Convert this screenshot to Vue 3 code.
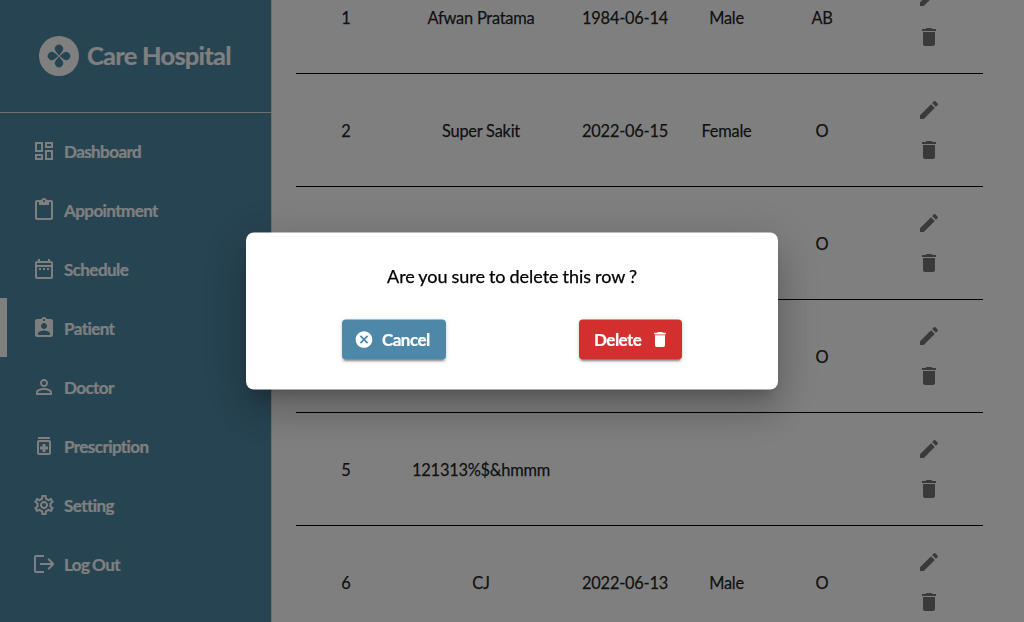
<script setup>
const navItems = [
  { label: 'Dashboard', d: 'M19 5v2h-4V5h4M9 5v6H5V5h4m10 8v6h-4v-6h4M9 17v2H5v-2h4M21 3h-8v6h8V3zM11 3H3v10h8V3zm10 8h-8v10h8V11zm-10 4H3v6h8v-6z' },
  { label: 'Appointment', d: 'M19 2h-4.18C14.4.84 13.3 0 12 0c-1.3 0-2.4.84-2.82 2H5c-1.1 0-2 .9-2 2v16c0 1.1.9 2 2 2h14c1.1 0 2-.9 2-2V4c0-1.1-.9-2-2-2zm-7 0c.55 0 1 .45 1 1s-.45 1-1 1-1-.45-1-1 .45-1 1-1zm7 18H5V4h2v3h10V4h2v16z' },
  { label: 'Schedule', d: 'M7 11h2v2H7v-2zm14-5v14c0 1.1-.9 2-2 2H5c-1.11 0-2-.9-2-2l.01-14c0-1.1.88-2 1.99-2h1V2h2v2h8V2h2v2h1c1.1 0 2 .9 2 2zM5 8h14V6H5v2zm14 12V10H5v10h14zm-4-7h2v-2h-2v2zm-4 0h2v-2h-2v2z' },
  { label: 'Patient', active: true, d: 'M19 3h-4.18C14.4 1.84 13.3 1 12 1c-1.3 0-2.4.84-2.82 2H5c-1.1 0-2 .9-2 2v14c0 1.1.9 2 2 2h14c1.1 0 2-.9 2-2V5c0-1.1-.9-2-2-2zm-7 0c.55 0 1 .45 1 1s-.45 1-1 1-1-.45-1-1 .45-1 1-1zm0 4c1.66 0 3 1.34 3 3s-1.34 3-3 3-3-1.34-3-3 1.34-3 3-3zm6 12H6v-1.4c0-2 4-3.1 6-3.1s6 1.1 6 3.1V19z' },
  { label: 'Doctor', d: 'M12 5.9c1.16 0 2.1.94 2.1 2.1s-.94 2.1-2.1 2.1S9.9 9.16 9.9 8s.94-2.1 2.1-2.1m0 9c2.97 0 6.1 1.46 6.1 2.1v1.1H5.9V17c0-.64 3.13-2.1 6.1-2.1M12 4C9.79 4 8 5.79 8 8s1.79 4 4 4 4-1.79 4-4-1.79-4-4-4zm0 9c-2.67 0-8 1.34-8 4v3h16v-3c0-2.66-5.33-4-8-4z' },
  { label: 'Prescription', d: 'M6 3h12v2H6zm11 3H7c-1.1 0-2 .9-2 2v11c0 1.1.9 2 2 2h10c1.1 0 2-.9 2-2V8c0-1.1-.9-2-2-2zm0 13H7V8h10v11zm-6.5-1h3v-2.5H16v-3h-2.5V10h-3v2.5H8v3h2.5z' },
  { label: 'Setting', d: 'M19.43 12.98c.04-.32.07-.64.07-.98 0-.34-.03-.66-.07-.98l2.11-1.65c.19-.15.24-.42.12-.64l-2-3.46c-.09-.16-.26-.25-.44-.25-.06 0-.12.01-.17.03l-2.49 1c-.52-.4-1.08-.73-1.69-.98l-.38-2.65C14.46 2.18 14.25 2 14 2h-4c-.25 0-.46.18-.49.42l-.38 2.65c-.61.25-1.17.59-1.69.98l-2.49-1c-.06-.02-.12-.03-.18-.03-.17 0-.34.09-.43.25l-2 3.46c-.13.22-.07.49.12.64l2.11 1.65c-.04.32-.07.65-.07.98 0 .33.03.66.07.98l-2.11 1.65c-.19.15-.24.42-.12.64l2 3.46c.09.16.26.25.44.25.06 0 .12-.01.17-.03l2.49-1c.52.4 1.08.73 1.69.98l.38 2.65c.03.24.24.42.49.42h4c.25 0 .46-.18.49-.42l.38-2.65c.61-.25 1.17-.59 1.69-.98l2.49 1c.06.02.12.03.18.03.17 0 .34-.09.43-.25l2-3.46c.12-.22.07-.49-.12-.64l-2.11-1.65zm-1.98-1.71c.04.31.05.52.05.73 0 .21-.02.43-.05.73l-.14 1.13.89.7 1.08.84-.7 1.21-1.27-.51-1.04-.42-.9.68c-.43.32-.84.56-1.25.73l-1.06.43-.16 1.13-.2 1.35h-1.4l-.19-1.35-.16-1.13-1.06-.43c-.43-.18-.83-.41-1.23-.71l-.91-.7-1.06.43-1.27.51-.7-1.21 1.08-.84.89-.7-.14-1.13c-.03-.31-.05-.54-.05-.74s.02-.43.05-.73l.14-1.13-.89-.7-1.08-.84.7-1.21 1.27.51 1.04.42.9-.68c.43-.32.84-.56 1.25-.73l1.06-.43.16-1.13.2-1.35h1.39l.19 1.35.16 1.13 1.06.43c.43.18.83.41 1.23.71l.91.7 1.06-.43 1.27-.51.7 1.21-1.07.85-.89.7.14 1.13zM12 8c-2.21 0-4 1.79-4 4s1.79 4 4 4 4-1.79 4-4-1.79-4-4-4zm0 6c-1.1 0-2-.9-2-2s.9-2 2-2 2 .9 2 2-.9 2-2 2z' },
  { label: 'Log Out', d: 'M12 3H4c-1.1 0-2 .9-2 2v14c0 1.1.9 2 2 2h8v-2H4V5h8V3zm4.9 3.1-1.4 1.4 3.5 3.5H8v2h11l-3.5 3.5 1.4 1.4L22 12.7v-1.4l-5.1-5.2z' }
]

const patients = [
  { id: 1, name: 'Afwan Pratama', born: '1984-06-14', gender: 'Male', blood: 'AB' },
  { id: 2, name: 'Super Sakit', born: '2022-06-15', gender: 'Female', blood: 'O' },
  { id: 3, name: '', born: '', gender: '', blood: 'O' },
  { id: 4, name: '', born: '', gender: '', blood: 'O' },
  { id: 5, name: '121313%$&hmmm', born: '', gender: '', blood: '' },
  { id: 6, name: 'CJ', born: '2022-06-13', gender: 'Male', blood: 'O' }
]

const pencil = 'M3 17.25V21h3.75L17.81 9.94l-3.75-3.75L3 17.25zM20.71 7.04c.39-.39.39-1.02 0-1.41l-2.34-2.34a.9959.9959 0 0 0-1.41 0l-1.83 1.83 3.75 3.75 1.83-1.83z'
const trash = 'M6 19c0 1.1.9 2 2 2h8c1.1 0 2-.9 2-2V7H6v12zM19 4h-3.5l-1-1h-5l-1 1H5v2h14V4z'
const cancel = 'M12 2C6.47 2 2 6.47 2 12s4.47 10 10 10 10-4.47 10-10S17.53 2 12 2zm5 13.59L15.59 17 12 13.41 8.41 17 7 15.59 10.59 12 7 8.41 8.41 7 12 10.59 15.59 7 17 8.41 13.41 12 17 15.59z'
</script>

<template>
  <div class="page">
    <aside class="sidebar">
      <header class="brand">
        <svg class="logo" viewBox="0 0 40 40">
          <circle cx="20" cy="20" r="20" fill="#fff" />
          <g class="petals">
            <path v-for="a in [0, 90, 180, 270]" :key="a" :transform="`rotate(${a} 20 20)`" d="M20 19.4 L16.8 15.4 A4.1 4.1 0 1 1 23.2 15.4 Z" />
          </g>
        </svg>
        <span class="brand-name">Care Hospital</span>
      </header>
      <nav class="nav">
        <a v-for="item in navItems" :key="item.label" class="nav-item" :class="{ active: item.active }">
          <svg class="icon" viewBox="0 0 24 24"><path :d="item.d" /></svg>
          <span class="nav-label">{{ item.label }}</span>
        </a>
      </nav>
    </aside>

    <main class="content">
      <div class="table">
        <div v-for="p in patients" :key="p.id" class="row">
          <span class="cell">{{ p.id }}</span>
          <span class="cell">{{ p.name }}</span>
          <span class="cell">{{ p.born }}</span>
          <span class="cell">{{ p.gender }}</span>
          <span class="cell">{{ p.blood }}</span>
          <div class="actions">
            <button class="icon-btn"><svg class="icon" viewBox="0 0 24 24"><path :d="pencil" /></svg></button>
            <button class="icon-btn"><svg class="icon" viewBox="0 0 24 24"><path :d="trash" /></svg></button>
          </div>
        </div>
      </div>
    </main>

    <div class="backdrop">
      <div class="dialog">
        <p class="question">Are you sure to delete this row ?</p>
        <div class="choices">
          <button class="btn cancel">
            <svg viewBox="0 0 24 24"><path :d="cancel" /></svg>
            <span>Cancel</span>
          </button>
          <button class="btn delete">
            <span>Delete</span>
            <svg viewBox="0 0 24 24"><path :d="trash" /></svg>
          </button>
        </div>
      </div>
    </div>
  </div>
</template>

<style>
body {
  overflow: hidden;
}
</style>

<style scoped>
.page {
  display: flex;
  width: 100vw;
  height: 100vh;
  overflow: hidden;
  background: #fff;
  font-family: Lato, sans-serif;
}
.page * {
  box-sizing: border-box;
}
.sidebar {
  width: 272px;
  flex: none;
  background: #4e88a5;
  border-right: 1px solid #e0e0e0;
  color: #fff;
}
.brand {
  display: flex;
  align-items: center;
  gap: 8px;
  height: 113px;
  padding-left: 39px;
  border-bottom: 1px solid #e0e0e0;
}
.logo {
  width: 40px;
  height: 40px;
}
.petals {
  fill: #4e88a5;
}
.brand-name {
  font-size: 25.5px;
  font-weight: 700;
  letter-spacing: -0.75px;
  line-height: 30px;
  padding-bottom: 2px;
  -webkit-text-stroke: 0.2px currentColor;
  white-space: nowrap;
}
.nav {
  padding-top: 8px;
}
.nav-item {
  display: flex;
  gap: 8px;
  height: 59px;
  padding: 18px 0 17px 32px;
}
.nav-item.active {
  border-left: 7px solid #fff;
  padding-left: 25px;
}
.nav-label {
  font-size: 17px;
  font-weight: 700;
  line-height: 25px;
  letter-spacing: -0.57px;
  word-spacing: -0.8px;
  -webkit-text-stroke: 0.2px currentColor;
  white-space: nowrap;
}
.icon {
  display: block;
  width: 24px;
  height: 24px;
  flex: none;
  fill: currentColor;
}
.content {
  flex: 1;
  padding: 0 41px 0 24px;
}
.table {
  margin-top: -39px;
}
.row {
  display: grid;
  grid-template-columns: 100px 170px 118px 85px 106px 108px;
  align-items: center;
  justify-items: center;
  height: 113px;
  border-bottom: 1px solid #000;
  font-size: 16.4px;
  line-height: 20px;
  letter-spacing: -0.24px;
  color: rgba(0, 0, 0, 0.87);
  white-space: nowrap;
}
.cell {
  padding-top: 1px;
  -webkit-text-stroke: 0.25px currentColor;
}
.icon-btn {
  display: block;
  padding: 8px;
  border: 0;
  background: none;
  color: #757575;
}
.backdrop {
  position: fixed;
  inset: 0;
  display: flex;
  align-items: center;
  justify-content: center;
  background: rgba(0, 0, 0, 0.5);
}
.dialog {
  width: 532px;
  height: 157px;
  padding-top: 31px;
  border-radius: 8px;
  background: #fff;
  box-shadow: 0 11px 15px -7px rgba(0, 0, 0, 0.2), 0 24px 38px 3px rgba(0, 0, 0, 0.14), 0 9px 46px 8px rgba(0, 0, 0, 0.12);
  transform: translateY(-0.5px);
}
.question {
  margin: 0 0 32px;
  font-size: 18px;
  line-height: 24px;
  text-align: center;
  word-spacing: -0.7px;
  color: #000;
  -webkit-text-stroke: 0.25px #000;
}
.choices {
  display: flex;
  justify-content: space-between;
  padding: 0 96px;
}
.btn {
  display: flex;
  align-items: center;
  gap: 8px;
  height: 40px;
  border: 0;
  border-radius: 4px;
  color: #fff;
  font: 700 17px/24px Lato, sans-serif;
  letter-spacing: -0.5px;
  -webkit-text-stroke: 0.2px currentColor;
  box-shadow: 0 3px 1px -2px rgba(0, 0, 0, 0.2), 0 2px 2px 0 rgba(0, 0, 0, 0.14), 0 1px 5px 0 rgba(0, 0, 0, 0.12);
}
.btn span {
  padding-top: 1px;
}
.btn svg {
  width: 20px;
  height: 20px;
  fill: #fff;
}
.btn.cancel {
  width: 104px;
  padding: 0 0 0 12px;
  background: #4e88a8;
}
.btn.delete {
  width: 103px;
  justify-content: space-between;
  padding: 0 12px 0 15px;
  background: #d32f2f;
}
</style>
